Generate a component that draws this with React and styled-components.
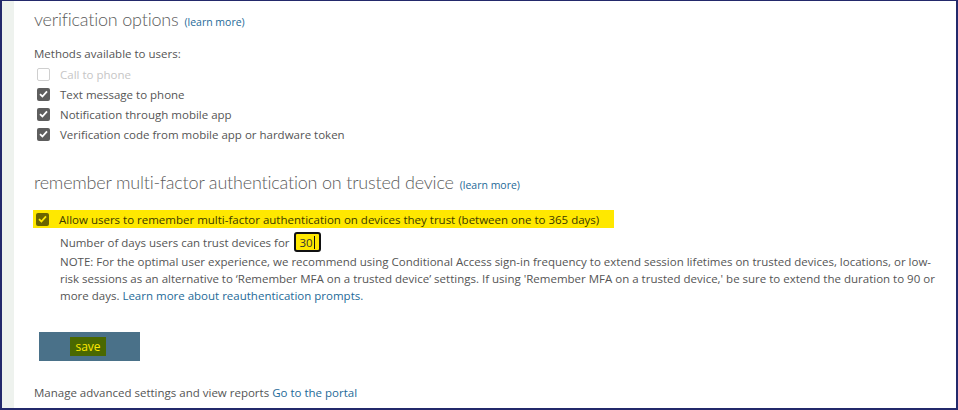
import React from 'react';
import styled, { createGlobalStyle } from 'styled-components';

const GlobalStyle = createGlobalStyle`
  body {
    margin: 0;
    background: #fff;
    font-family: 'Open Sans', 'Liberation Sans', sans-serif;
  }
`;

const Frame = styled.div`
  box-sizing: border-box;
  width: 958px;
  height: 410px;
  display: flex;
  border-top: 1px solid #23296b;
  border-left: 2px solid #23296b;
  border-right: 2px solid #23296b;
  border-bottom: 2px solid #23296b;
  overflow: hidden;
`;

const Gutter = styled.div`
  width: 12px;
  flex-shrink: 0;
  background: #eef2ee;
`;

const Content = styled.div`
  flex: 1;
  padding: 5px 0 0 20px;
  color: #555;
  font-size: 11.5px;
`;

const Heading = styled.h2`
  margin: 0;
  font-family: Lato, 'Open Sans', sans-serif;
  font-weight: 300;
  font-size: 18px;
  letter-spacing: -0.2px;
  line-height: 26px;
  color: #5c5c5c;
  margin-top: ${(p) => p.$top || 0}px;
`;

const Small = styled.a`
  font-family: 'Open Sans', 'Liberation Sans', sans-serif;
  font-size: 10.5px;
  font-weight: 400;
  letter-spacing: 0;
  color: #1e6a98;
  text-decoration: none;
  margin-left: 6px;
`;

const Link = styled.a`
  color: #1e6a98;
  text-decoration: none;
`;

const Label = styled.div`
  margin-top: 9px;
  line-height: 20px;
`;

const OptionList = styled.div`
  display: flex;
  flex-direction: column;
  padding-left: 3px;
`;

const Option = styled.label`
  display: flex;
  align-items: center;
  gap: 10px;
  height: 20px;
  color: ${(p) => (p.$disabled ? '#c6c6c6' : '#555')};
`;

const Box = styled.span`
  box-sizing: border-box;
  width: 13px;
  height: 13px;
  border-radius: 2px;
  display: inline-flex;
  align-items: center;
  justify-content: center;
  flex-shrink: 0;
  border: 1px solid ${(p) => (p.$checked ? 'transparent' : '#cfcfcf')};
  background: ${(p) => (p.$checked ? (p.$marked ? '#6a6400' : '#5e5e5e') : '#fff')};
`;

function Checkbox({ checked, marked }) {
  return (
    <Box $checked={checked} $marked={marked}>
      {checked && (
        <svg width="9" height="8" viewBox="0 0 9 8">
          <path d="M1 4.2 L3.4 6.5 L8 1.4" fill="none" stroke={marked ? '#ffe800' : '#fff'} strokeWidth="1.8" />
        </svg>
      )}
    </Box>
  );
}

const Highlight = styled.label`
  display: flex;
  align-items: center;
  gap: 10px;
  width: 578px;
  height: 18px;
  margin-top: 12px;
  padding-left: 3px;
  margin-left: -1px;
  background: #ffe800;
  color: #3c3a00;
`;

const Details = styled.div`
  padding-left: 26px;
  width: 884px;
  line-height: 17px;
`;

const DaysRow = styled.div`
  display: flex;
  align-items: center;
  gap: 4px;
  height: 22px;
  margin-top: 3px;
`;

const DaysInput = styled.span`
  box-sizing: border-box;
  width: 27px;
  height: 20px;
  display: inline-flex;
  align-items: center;
  padding-left: 4px;
  background: #ffe800;
  border: 2px solid #111;
  border-radius: 3px;
  color: #333;
`;

const Caret = styled.span`
  display: inline-block;
  width: 1px;
  height: 13px;
  background: #111;
  margin-left: 1px;
`;

const Note = styled.p`
  margin: 0;
`;

const SaveButton = styled.button`
  width: 101px;
  height: 29px;
  margin: 28px 0 0 5px;
  border: none;
  background: #4a7189;
  display: flex;
  align-items: center;
  justify-content: center;
  padding: 0;
  cursor: pointer;
`;

const SaveText = styled.span`
  background: #4a6800;
  color: #ffe800;
  font-family: 'Open Sans', 'Liberation Sans', sans-serif;
  font-size: 12px;
  line-height: 19px;
  padding: 0 5px;
  margin-left: -3px;
`;

const Footer = styled.div`
  margin-top: 22px;
  line-height: 20px;
`;

export default function App() {
  return (
    <>
      <GlobalStyle />
      <Frame>
        <Gutter />
        <Content>
          <Heading>
            verification options<Small href="#">(learn more)</Small>
          </Heading>
          <Label>Methods available to users:</Label>
          <OptionList>
            <Option $disabled>
              <Checkbox />
              Call to phone
            </Option>
            <Option>
              <Checkbox checked />
              Text message to phone
            </Option>
            <Option>
              <Checkbox checked />
              Notification through mobile app
            </Option>
            <Option>
              <Checkbox checked />
              Verification code from mobile app or hardware token
            </Option>
          </OptionList>

          <Heading $top={25}>
            remember multi-factor authentication on trusted device<Small href="#">(learn more)</Small>
          </Heading>
          <Highlight>
            <Checkbox checked marked />
            Allow users to remember multi-factor authentication on devices they trust (between one to 365 days)
          </Highlight>
          <Details>
            <DaysRow>
              Number of days users can trust devices for
              <DaysInput>
                30
                <Caret />
              </DaysInput>
            </DaysRow>
            <Note>
              NOTE: For the optimal user experience, we recommend using Conditional Access sign-in frequency to
              extend session lifetimes on trusted devices, locations, or low-risk sessions as an alternative to
              ‘Remember MFA on a trusted device’ settings. If using 'Remember MFA on a trusted device,' be sure to
              extend the duration to 90 or more days. <Link href="#">Learn more about reauthentication prompts.</Link>
            </Note>
          </Details>
          <SaveButton>
            <SaveText>save</SaveText>
          </SaveButton>
          <Footer>
            Manage advanced settings and view reports <Link href="#">Go to the portal</Link>
          </Footer>
        </Content>
      </Frame>
    </>
  );
}
